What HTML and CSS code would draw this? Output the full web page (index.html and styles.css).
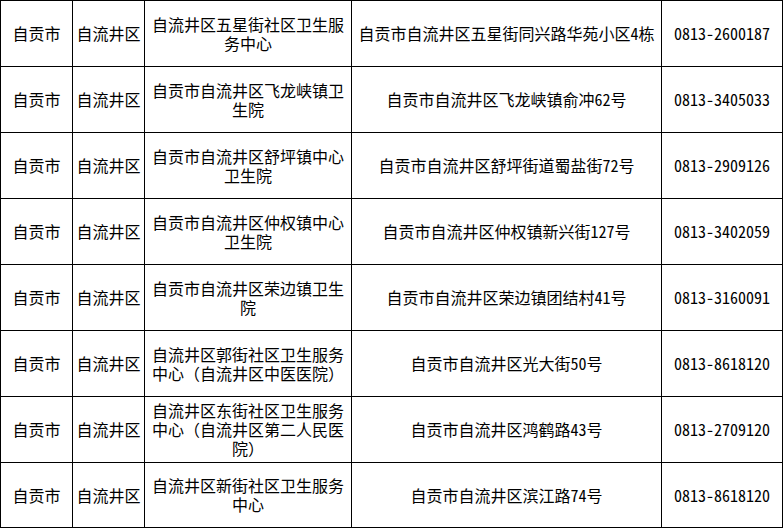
FILE: index.html
```html
<!DOCTYPE html>
<html lang="zh-CN">
<head>
<meta charset="utf-8">
<title>自流井区卫生服务机构</title>
<link rel="stylesheet" href="styles.css">
</head>
<body>
<table class="grid">
  <colgroup>
    <col class="c-city">
    <col class="c-dist">
    <col class="c-name">
    <col class="c-addr">
    <col class="c-tel">
  </colgroup>
  <tbody>
    <tr>
      <td>自贡市</td><td>自流井区</td>
      <td>自流井区五星街社区卫生服<br>务中心</td>
      <td class="num">自贡市自流井区五星街同兴路华苑小区4栋</td>
      <td class="num">0813-2600187</td>
    </tr>
    <tr>
      <td>自贡市</td><td>自流井区</td>
      <td>自贡市自流井区飞龙峡镇卫<br>生院</td>
      <td class="num">自贡市自流井区飞龙峡镇俞冲62号</td>
      <td class="num">0813-3405033</td>
    </tr>
    <tr>
      <td>自贡市</td><td>自流井区</td>
      <td>自贡市自流井区舒坪镇中心<br>卫生院</td>
      <td class="num">自贡市自流井区舒坪街道蜀盐街72号</td>
      <td class="num">0813-2909126</td>
    </tr>
    <tr>
      <td>自贡市</td><td>自流井区</td>
      <td>自贡市自流井区仲权镇中心<br>卫生院</td>
      <td class="num">自贡市自流井区仲权镇新兴街127号</td>
      <td class="num">0813-3402059</td>
    </tr>
    <tr>
      <td>自贡市</td><td>自流井区</td>
      <td>自贡市自流井区荣边镇卫生<br>院</td>
      <td class="num">自贡市自流井区荣边镇团结村41号</td>
      <td class="num">0813-3160091</td>
    </tr>
    <tr>
      <td>自贡市</td><td>自流井区</td>
      <td>自流井区郭街社区卫生服务<br>中心（自流井区中医医院）</td>
      <td class="num">自贡市自流井区光大街50号</td>
      <td class="num">0813-8618120</td>
    </tr>
    <tr>
      <td>自贡市</td><td>自流井区</td>
      <td>自流井区东街社区卫生服务<br>中心（自流井区第二人民医<br>院）</td>
      <td class="num">自贡市自流井区鸿鹤路43号</td>
      <td class="num">0813-2709120</td>
    </tr>
    <tr class="last">
      <td>自贡市</td><td>自流井区</td>
      <td>自流井区新街社区卫生服务<br>中心</td>
      <td class="num">自贡市自流井区滨江路74号</td>
      <td class="num">0813-8618120</td>
    </tr>
  </tbody>
</table>
</body>
</html>
```

FILE: styles.css
```css
html, body {
  margin: 0;
  padding: 0;
  background: #ffffff;
}

.grid {
  border-collapse: collapse;
  table-layout: fixed;
  width: 783px;
  font-family: "Noto Sans CJK SC", "Noto Sans", sans-serif;
  font-size: 16px;
  line-height: 19px;
  color: #000000;
}

.c-city { width: 72px; }
.c-dist { width: 72px; }
.c-name { width: 207px; }
.c-addr { width: 310px; }
.c-tel  { width: 121px; }

.grid tr {
  height: 66px;
}

.grid tr.last {
  height: 65px;
}

.grid td {
  border: 1px solid #000000;
  padding: 0 1px;
  text-align: center;
  vertical-align: middle;
  overflow: hidden;
}

.grid td.num {
  font-feature-settings: "hwid";
}
```
